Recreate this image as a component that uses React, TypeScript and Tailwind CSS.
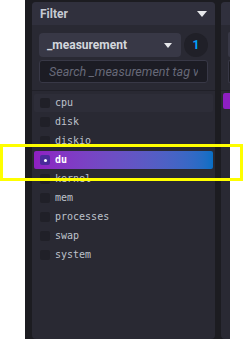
const ITEMS = [
  "cpu",
  "disk",
  "diskio",
  "du",
  "kernel",
  "mem",
  "processes",
  "swap",
  "system",
];

const SELECTED = "du";

function Caret({ className = "" }: { className?: string }) {
  return (
    <svg viewBox="0 0 10 6" className={className} fill="currentColor" aria-hidden>
      <path d="M0 0h10L5 6z" />
    </svg>
  );
}

function TagSelector() {
  return (
    <div className="w-[183px] shrink-0 rounded-[4px] bg-[#292933] flex flex-col overflow-hidden">
      {/* Header */}
      <div className="h-[23px] shrink-0 flex items-center justify-between pl-[8px] pr-[8px] bg-[#30303d]">
        <span className="text-[12px] font-bold text-[#c6cad3] font-['Roboto',sans-serif] leading-none">
          Filter
        </span>
        <Caret className="w-[10px] h-[6px] text-[#e7e8eb]" />
      </div>

      {/* Controls */}
      <div className="px-[7px] pt-[8px] flex flex-col gap-[3px]">
        <div className="flex items-center gap-[3px]">
          <div className="h-[24px] flex-1 rounded-[4px] bg-[#383846] flex items-center justify-between pl-[8px] pr-[9px]">
            <span className="text-[12px] font-bold text-[#d4d7dd] font-['Roboto',sans-serif] leading-none">
              _measurement
            </span>
            <Caret className="w-[8px] h-[5px] text-[#e7e8eb]" />
          </div>
          <div className="w-[24px] h-[24px] rounded-full bg-[#202028] flex items-center justify-center">
            <span className="text-[12px] font-bold text-[#00a3ff] font-['Roboto',sans-serif] leading-none">
              1
            </span>
          </div>
        </div>
        <input
          readOnly
          placeholder="Search _measurement tag values"
          className="h-[23px] w-full rounded-[3px] bg-[#1c1c24] border border-[#383846] px-[9px] text-[12.5px] italic text-[#d4d7dd] placeholder:text-[#676978] font-['Roboto',sans-serif] outline-none"
        />
      </div>

      <div className="mt-[7px] h-px bg-[#202028]" />

      {/* Values */}
      <div className="pt-[3px] flex flex-col">
        {ITEMS.map((item, i) => {
          const active = item === SELECTED;
          return (
            <div key={item} className="h-[19px] px-[2px] pb-[1px]">
              <div
                className={`h-[18px] rounded-[2px] flex items-center pl-[6px] gap-[5px] ${
                  active
                    ? "bg-gradient-to-r from-[#8e1fc3] to-[#066fc5]"
                    : i === 0
                    ? "bg-[#2d2d38]"
                    : ""
                }`}
              >
                <span
                  className={`w-[10px] h-[10px] rounded-[2px] flex items-center justify-center ${
                    active ? "bg-[#4a2a9c]" : "bg-[#202028]"
                  }`}
                >
                  {active && <span className="w-[3px] h-[3px] rounded-full bg-white" />}
                </span>
                <span
                  className={`text-[10px] leading-none font-['DejaVu_Sans_Mono',monospace] ${
                    active ? "text-white font-bold" : "text-[#bec2cc]"
                  }`}
                >
                  {item}
                </span>
              </div>
            </div>
          );
        })}
      </div>
    </div>
  );
}

function NextSelector() {
  return (
    <div className="w-[9px] shrink-0 rounded-l-[4px] bg-[#292933] flex flex-col overflow-hidden">
      <div className="h-[23px] shrink-0 bg-[#30303d]" />
      <div className="pl-[7px] pt-[7px] flex flex-col gap-[3px]">
        <div className="h-[25px] rounded-l-[4px] bg-[#383846]" />
        <div className="h-[23px] rounded-l-[3px] bg-[#1c1c24] border-l border-y border-[#383846]" />
      </div>
      <div className="mt-[7px] h-px bg-[#202028]" />
      <div className="pt-[2px] pl-[2px]">
        <div className="h-[16px] rounded-l-[2px] bg-[#8e1fc3]" />
      </div>
    </div>
  );
}

export default function App() {
  return (
    <div className="relative w-[244px] h-[339px] bg-white overflow-hidden">
      <div className="ml-[25px] w-[205px] h-full bg-[#1c1c21] flex gap-[6px] pl-[7px] pt-[2px]">
        <TagSelector />
        <NextSelector />
      </div>
      {/* highlight annotation */}
      <div className="absolute left-0 top-[144px] w-[243px] h-[37px] border-[3px] border-[#ffff00] pointer-events-none" />
    </div>
  );
}
